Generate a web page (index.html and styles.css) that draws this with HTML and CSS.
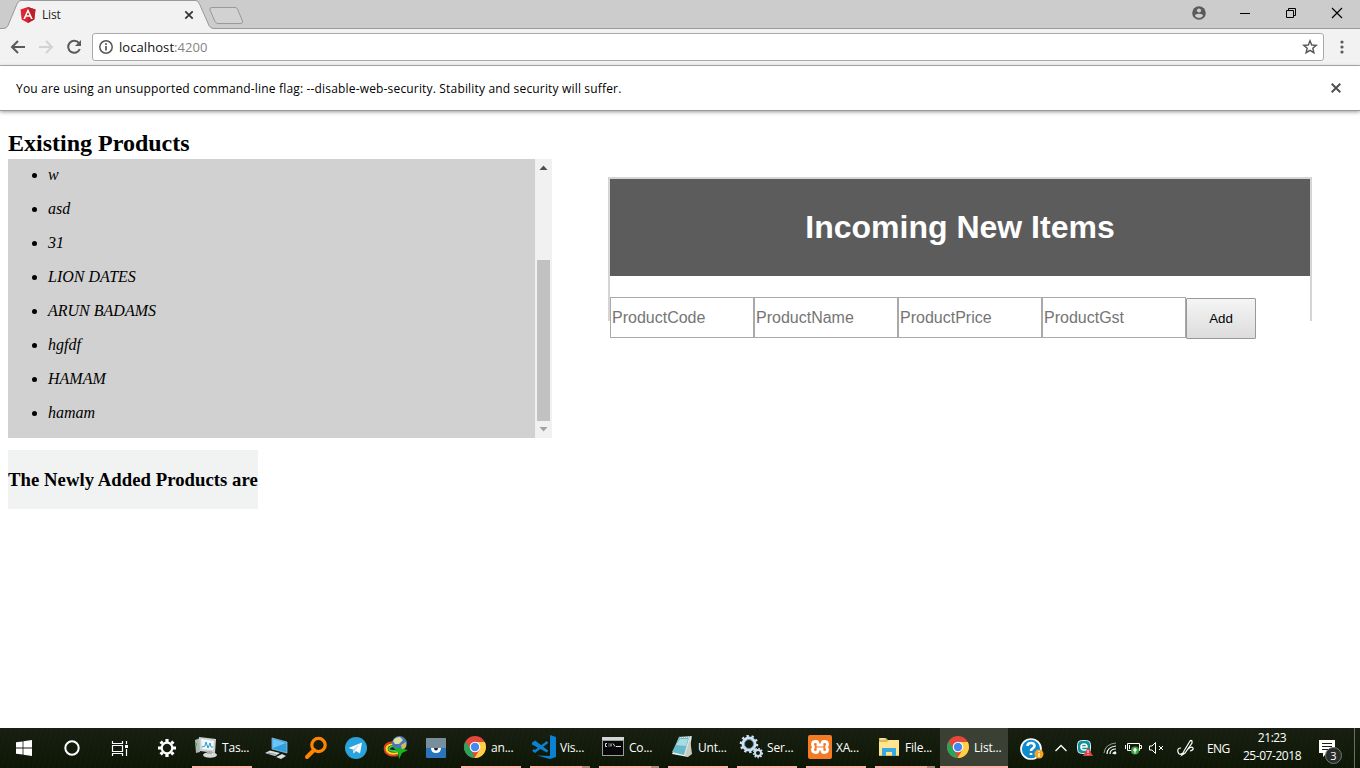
FILE: index.html
```html
<!DOCTYPE html>
<html lang="en">
<head>
<meta charset="utf-8">
<title>List</title>
<link rel="stylesheet" href="styles.css">
</head>
<body>
<div class="screen">
  <header class="tabstrip">
    <svg class="tab-shapes" width="260" height="29" viewBox="0 0 260 29">
      <path d="M0 28.500H3Q7 28.500 8 25.500L17 4Q18.500 .500 21 .500H196Q198 .500 199.500 4L209 25.500Q210 28.500 214 28.500H260V30H0Z" fill="#f2f2f2" stroke="#999"/>
      <path d="M212 7.500H235Q237 7.500 237.500 9L242.500 21Q243 23.500 241 23.500H218Q216 23.500 215 21.500L210 10Q209 7.500 212 7.500Z" fill="#d2d2d2" stroke="#999"/>
    </svg>
    <div class="tab">
      <svg width="16" height="16" viewBox="0 0 16 16"><path d="M8 0L15.500 2.600L14.300 12.500L8 16L1.700 12.500L.5 2.600Z" fill="#dd2634"/><path d="M8 0L15.500 2.600L14.300 12.500L8 16Z" fill="#bd202d"/><path fill-rule="evenodd" d="M8 1.800L12.700 12H10.900L10 9.700H6L5.100 12H3.300ZM8 5.200L6.600 8.300H9.400Z" fill="#fff"/></svg>
      <span class="tab-title">List</span>
      <svg class="tab-close" width="10" height="10" viewBox="0 0 10 10"><path d="M1.300 1.300L8.700 8.700M8.700 1.300L1.300 8.700" stroke="#333" stroke-width="1.700"/></svg>
    </div>
    <div class="window-controls">
      <svg class="profile" width="14" height="14" viewBox="0 0 14 14"><circle cx="7" cy="7" r="6.800" fill="#5a5a5a"/><circle cx="7" cy="4.500" r="2.100" fill="#ccc"/><path d="M3 10Q3 7.800 7 7.800T11 10Q9.500 12 7 12T3 10Z" fill="#ccc"/></svg>
      <svg width="46" height="28" viewBox="0 0 46 28"><path d="M18 13.500H28" stroke="#000"/></svg>
      <svg width="46" height="28" viewBox="0 0 46 28" fill="none" stroke="#000"><path d="M18.500 10.500H25.500V17.500H18.500ZM20.500 10V8.500H27.500V15.500H26"/></svg>
      <svg width="46" height="28" viewBox="0 0 46 28"><path d="M18 8L28 18M28 8L18 18" stroke="#000" stroke-width="1.200"/></svg>
    </div>
  </header>

  <div class="toolbar">
    <svg class="nav-icon" width="16" height="16" viewBox="0 0 16 16"><path d="M15 8H2.500M8 2L2 8L8 14" fill="none" stroke="#5a5a5a" stroke-width="2"/></svg>
    <svg class="nav-icon" width="16" height="16" viewBox="0 0 16 16"><path d="M1 8H13.500M8 2L14 8L8 14" fill="none" stroke="#d2d2d2" stroke-width="2"/></svg>
    <svg class="nav-icon" width="16" height="16" viewBox="0 0 16 16"><path d="M13 4.200A6 6 0 1 0 13.800 10" fill="none" stroke="#5a5a5a" stroke-width="2"/><path d="M15 1V7H9Z" fill="#5a5a5a"/></svg>
    <div class="address">
      <svg width="14" height="14" viewBox="0 0 14 14"><circle cx="7" cy="7" r="6.200" fill="none" stroke="#555" stroke-width="1.500"/><path d="M7 6V10.500M7 3.300V5" stroke="#555" stroke-width="1.700"/></svg>
      <span class="url">localhost<span class="port">:4200</span></span>
      <svg class="star" width="16" height="16" viewBox="0 0 16 16"><path d="M8 1.800L9.700 6L14.200 6.300L10.800 9.200L11.900 13.700L8 11.300L4.100 13.700L5.200 9.200L1.800 6.300L6.300 6Z" fill="none" stroke="#555" stroke-width="1.400"/></svg>
    </div>
    <svg class="menu" width="4" height="14" viewBox="0 0 4 14" fill="#5a5a5a"><circle cx="2" cy="2" r="1.600"/><circle cx="2" cy="7" r="1.600"/><circle cx="2" cy="12" r="1.600"/></svg>
  </div>

  <div class="infobar">
    <span>You are using an unsupported command-line flag: --disable-web-security. Stability and security will suffer.</span>
    <svg width="10" height="10" viewBox="0 0 10 10"><path d="M.7 .7L9.300 9.300M9.300 .7L.7 9.300" stroke="#505050" stroke-width="2"/></svg>
  </div>

  <main class="page">
    <section class="existing">
      <h2>Existing Products</h2>
      <div class="list-box">
        <ul>
          <li>w</li><li>asd</li><li>31</li><li>LION DATES</li><li>ARUN BADAMS</li><li>hgfdf</li><li>HAMAM</li><li>hamam</li>
        </ul>
        <div class="scrollbar">
          <svg width="17" height="17" viewBox="0 0 17 17"><path d="M4.500 11L8.500 6.500L12.500 11Z" fill="#505050"/></svg>
          <div class="thumb"></div>
          <svg width="17" height="17" viewBox="0 0 17 17"><path d="M4.500 6L8.500 10.500L12.500 6Z" fill="#a3a3a3"/></svg>
        </div>
      </div>
      <div class="added"><h3>The Newly Added Products are</h3></div>
    </section>
    <section class="incoming">
      <div class="incoming-header"><h1>Incoming New Items</h1></div>
      <form class="fields">
        <input placeholder="ProductCode"><input placeholder="ProductName"><input placeholder="ProductPrice"><input placeholder="ProductGst"><button type="button">Add</button>
      </form>
    </section>
  </main>

  <footer class="taskbar">
    <div class="sys"><svg width="16" height="16" viewBox="0 0 16 16" fill="#fff"><path d="M0 2.300L6.600 1.400V7.600H0ZM7.400 1.300L16 0V7.600H7.400ZM0 8.400H6.600V14.600L0 13.700ZM7.400 8.400H16V16L7.400 14.700Z"/></svg></div>
    <div class="sys"><svg width="16" height="16" viewBox="0 0 16 16"><circle cx="8" cy="8" r="6.700" fill="none" stroke="#fff" stroke-width="2"/></svg></div>
    <div class="sys"><svg class="task-view" width="17" height="17" viewBox="0 0 17 17" fill="none" stroke="#fff"><path d="M1.500 1V3.500H11.500V1M1.500 16V13.500H11.500V16M1.500 5.500H11.500V11.500H1.500ZM15.500 1V4M15.500 9V16" stroke-width="1.200"/><path d="M14 5H17V8H14Z" fill="#fff" stroke="none"/></svg></div>
    <div class="sys"><svg class="gear" width="20" height="20" viewBox="-10 -10 20 20" stroke="#fff"><circle r="5.300" fill="none" stroke-width="2.200"/><g stroke-width="3.200"><path d="M0-9V-6M0 9V6M-9 0H-6M9 0H6M-6.400-6.400L-4.300-4.300M6.400 6.400L4.300 4.300M6.400-6.400L4.300-4.300M-6.400 6.400L-4.300 4.300"/></g></svg></div>

    <div class="task task-first"><svg width="24" height="24" viewBox="0 0 24 24"><path d="M1 5L6 3V17L2 18Z" fill="#aeb5b4"/><path d="M2 8V11" stroke="#41ba3e" stroke-width="2"/><path d="M5 2L22 4L21 18L6 16Z" fill="#ccd1d1"/><path d="M7 4L20 6L19 15L8 14Z" fill="#eff8fa"/><path d="M8 12L11 11L12 7L14 13L16 8L17 12H19" fill="none" stroke="#3098ca"/><ellipse cx="16" cy="20" rx="7" ry="2.800" fill="#d7dadb"/><path d="M13 16H18V19H13Z" fill="#a8afaf"/></svg><span>Tas...</span></div>

    <div class="pin"><svg width="24" height="24" viewBox="0 0 24 24"><path d="M8 2L23 6V17L8 13Z" fill="#2fa0df" stroke="#9fcbe3" stroke-width=".7"/><path d="M9 3L22 7L9 12Z" fill="#6ec4f5"/><path d="M1 17L6 14.500L16 17L11 20ZM12 21L18 18L22 20L17 23Z" fill="#d8e0e4"/><path d="M4 17L12 18.500" stroke="#82919a"/></svg></div>
    <div class="pin"><svg width="24" height="24" viewBox="0 0 24 24"><circle cx="14.500" cy="9" r="6.700" fill="none" stroke="#ff8500" stroke-width="3.200"/><path d="M10 14L3 21" stroke="#ff8500" stroke-width="4" stroke-linecap="round"/></svg></div>
    <div class="pin"><svg width="24" height="24" viewBox="0 0 24 24"><circle cx="12" cy="12" r="11" fill="#29a3dc"/><path d="M4.500 12L18 6.500L16 17.500L12 15L9.500 17.500L9 13.500Z" fill="#fff"/><path d="M9 13.500L16 8L11 14.500L9.500 17.500Z" fill="#b9d9e9"/></svg></div>
    <div class="pin"><svg width="26" height="26" viewBox="0 0 26 26" fill="none"><path d="M11 7Q-1 8 2.500 17Q7 22 15 20" stroke="#e13d27" stroke-width="2"/><path d="M11 9Q1 10 4.500 16.500Q8 20 15 18" stroke="#ffd820" stroke-width="2.200"/><path d="M11 11Q4 12 7 15.500L15 16.500" stroke="#42c949" stroke-width="2"/><circle cx="16.500" cy="8.500" r="7.500" fill="#4778bd"/><path d="M10 6Q12 2 17 2L20 5L16 9L12 9Z" fill="#dfdf9b"/><path d="M18 10L23 7L23 12L19 15Z" fill="#d7b94f"/><path d="M10 12L25 15L19 18L16 24L15 17Z" fill="#18b51d"/></svg></div>
    <div class="pin"><svg width="20" height="20" viewBox="0 0 20 20"><rect width="20" height="20" rx="1" fill="#2874bd"/><path d="M0 1Q0 0 1 0H19Q20 0 20 1V10H0Z" fill="#788e9c"/><path d="M5 10H15Q15 15 10 15T5 10Z" fill="#fff"/><path d="M8 10H12Q12 12.500 10 12.500T8 10Z" fill="#182534"/></svg></div>

    <div class="task chrome-task"><svg width="24" height="24" viewBox="0 0 24 24"><circle cx="12" cy="12" r="11" fill="#e4473b"/><path d="M2.500 6.500L8 15L12 23A11 11 0 0 1 2.500 6.500Z" fill="#28a45b"/><path d="M12 7H21.800A11 11 0 0 1 11.500 23L17 14Z" fill="#ffd043"/><circle cx="12" cy="12" r="5.300" fill="#fff"/><circle cx="12" cy="12" r="4.200" fill="#4587f3"/></svg><span>an...</span></div>
    <div class="task stacked"><svg width="24" height="24" viewBox="0 0 24 24"><path d="M18 0L24 2V22L18 24L5 20.500L18 21Z" fill="#0b82d1"/><path d="M15.500 7L3 16.500L1 15M1 8.500L3 7L15.500 16.500Z" fill="none" stroke="#0b82d1" stroke-width="2.500"/></svg><span>Vis...</span></div>
    <div class="task stacked"><svg width="24" height="24" viewBox="0 0 24 24"><path d="M1 2H23V21H1Z" fill="#9b9e9e"/><path d="M1 2H23V5H1Z" fill="#d4d6d6"/><path d="M2 6H22V20H2Z" fill="#080808"/><path d="M6 8.500H4.500V11.500H6M8 8.500V9.500M8 10.500V11.500M10 8.500V11.500M12 8.500L14 11.500M15 11.500H20" fill="none" stroke="#ddd"/></svg><span>Co...</span></div>
    <div class="task"><svg width="24" height="24" viewBox="0 0 24 24"><path d="M9 2L22 1L18 22L2 19Z" fill="#e5efed"/><path d="M9 3L19 3L14 20L2 17Z" fill="#68bac9"/><path d="M10 4H18L16 11L6 10Z" fill="#a9dce1"/><path d="M20 3L22 19L18 22L15 20Z" fill="#c6cdbf"/><path d="M9 2H22" stroke="#54828c" stroke-dasharray="1 1"/></svg><span>Unt...</span></div>
    <div class="task"><svg width="24" height="24" viewBox="0 0 24 24" fill="none"><g stroke="#cfe2f2"><circle cx="10" cy="9" r="6" stroke-width="3"/><circle cx="10" cy="9" r="8" stroke-width="2.500" stroke-dasharray="2.300 2.700"/><circle cx="19" cy="18" r="3" stroke-width="2"/><circle cx="19" cy="18" r="4.500" stroke-width="1.500" stroke-dasharray="1.500 1.500"/></g><circle cx="10" cy="9" r="4.500" stroke="#6895bd"/></svg><span>Ser...</span></div>
    <div class="task"><svg width="24" height="24" viewBox="0 0 24 24"><rect width="24" height="24" rx="2" fill="#f47b26"/><path d="M8 6.500Q4.500 6.500 4.500 9.200Q4.500 11.500 6.500 12Q4.500 12.500 4.500 14.800Q4.500 17.500 8 17.500Q10 17.500 10 15V14H14V15Q14 17.500 16 17.500Q19.500 17.500 19.500 14.800Q19.500 12.500 17.500 12Q19.500 11.500 19.500 9.200Q19.500 6.500 16 6.500Q14 6.500 14 9V10H10V9Q10 6.500 8 6.500Z" fill="none" stroke="#fff" stroke-width="2.800"/></svg><span>XA...</span></div>
    <div class="task stacked"><svg width="24" height="24" viewBox="0 0 24 24"><path d="M2 3H9L11 5H22V21H2Z" fill="#ddb951"/><path d="M2 7H10L12 5H22V20H2Z" fill="#ffe591"/><path d="M5 13H19V21H15V17H9V21H5Z" fill="#38a9de"/><path d="M3 4H8" stroke="#fff"/></svg><span>File...</span></div>
    <div class="task active"><svg width="24" height="24" viewBox="0 0 24 24"><circle cx="12" cy="12" r="11" fill="#e4473b"/><path d="M2.500 6.500L8 15L12 23A11 11 0 0 1 2.500 6.500Z" fill="#28a45b"/><path d="M12 7H21.800A11 11 0 0 1 11.500 23L17 14Z" fill="#ffd043"/><circle cx="12" cy="12" r="5.300" fill="#fff"/><circle cx="12" cy="12" r="4.200" fill="#4587f3"/></svg><span>List...</span></div>

    <div class="tray">
      <svg class="help" width="24" height="24" viewBox="0 0 24 24"><circle cx="11" cy="12" r="10" fill="#108cce" stroke="#fff" stroke-width="1.700"/><path d="M7.500 9Q7.500 6 11 6T14.500 9Q14.500 10.500 12 12Q11 12.700 11 14M11 16V18" fill="none" stroke="#fff" stroke-width="2.600"/><circle cx="19" cy="17" r="4.500" fill="#f2a620"/><path d="M19 14V15M19 16V20" stroke="#fff" stroke-width="1.300"/></svg>
      <svg class="chevron" width="12" height="8" viewBox="0 0 12 8"><path d="M.5 7L6 1.500L11.500 7" fill="none" stroke="#fff" stroke-width="1.300"/></svg>
      <svg class="eset" width="17" height="17" viewBox="0 0 17 17"><rect x=".5" y=".5" width="13" height="13" rx="4" fill="#12909b" stroke="#d7eeee"/><path d="M4 7H10Q10 4 7 4T4 7Q4 10 7 10H10" fill="none" stroke="#fff" stroke-width="1.600"/><path d="M11 7.500L16 16H6Z" fill="#e34240"/><path d="M11 10V13M11 14V15" stroke="#fff"/></svg>
      <svg class="wifi" width="14" height="14" viewBox="0 0 14 14" fill="none" stroke="#fff"><path d="M1 12Q2 3 13 2" stroke="#999"/><path d="M4 13Q4 6 13 5M7 13Q7 8 13 8M10 13Q10 11 13 11" stroke-width="1.200"/><circle cx="12" cy="12" r="1" fill="#fff"/></svg>
      <svg class="battery" width="17" height="14" viewBox="0 0 17 14"><path d="M2.500 2.500H14.500V9.500H2.500ZM15 4.500H16.500V7.500H15M4.500 4V8M.500 4V8" fill="none" stroke="#fff"/><circle cx="10" cy="9.500" r="4" fill="#36a642"/><path d="M10 12.500V10" stroke="#fff"/><path d="M8 9Q10 12 12 9L10 6.500Z" fill="#fff"/></svg>
      <svg class="volume" width="16" height="14" viewBox="0 0 16 14" fill="none" stroke="#fff"><path d="M.5 5H3L6.500 1.500V12.500L3 9H.5ZM10 5L14 9M14 5L10 9"/></svg>
      <svg class="pen" width="18" height="18" viewBox="0 0 18 18" fill="none" stroke="#fff" stroke-width="1.200"><path d="M4 9Q0 9 1 13T6 14M7 12L13 2Q14 1 15 2V4L8 14L5 16Z"/><path d="M11 10Q14 7 16 9Q17 11 13 12"/></svg>
      <span class="language">ENG</span>
      <div class="clock"><span>21:23</span><span>25-07-2018</span></div>
      <div class="notifications"><svg width="17" height="17" viewBox="0 0 17 17"><path d="M0 0H16V13H8L4 17V13H0Z" fill="#fff"/><path d="M3 3.500H13M3 6.500H13M3 9.500H10" stroke="#15200f"/></svg><span class="badge">3</span></div>
    </div>
  </footer>
</div>
</body>
</html>
```

FILE: styles.css
```css
* { box-sizing: border-box; }
body { margin: 0; overflow: hidden; background: #fff; font-family: "Open Sans", "Noto Sans", sans-serif; font-size: 12px; }
svg { display: block; flex: none; }
.screen { width: 1360px; height: 768px; display: flex; flex-direction: column; }

.tabstrip { position: relative; height: 29px; flex: none; display: flex; align-items: flex-start; justify-content: space-between; background: #ccc; border-bottom: 1px solid #999; }
.tab-shapes { position: absolute; left: 0; top: 0; }
.tab { position: relative; display: flex; align-items: center; width: 194px; height: 29px; padding-left: 20px; }
.tab-title { margin-left: 6px; font-size: 12px; letter-spacing: -.2px; color: #222; }
.tab-close { margin-left: auto; }
.window-controls { display: flex; align-items: center; height: 28px; }
.window-controls .profile { margin: 0 16px 2px 0; }

.toolbar { height: 37px; flex: none; display: flex; align-items: center; padding: 0 16px 0 10px; background: #f2f2f2; border-bottom: 1px solid #b3b3b3; }
.nav-icon { margin-right: 12px; }
.address { width: 1232px; flex: none; height: 28px; margin-left: -2px; display: flex; align-items: center; padding: 0 5px 0 6px; border: 1px solid #aaa; border-radius: 3px; background: #fff; }
.url { margin-left: 6px; font-size: 13px; color: #111; letter-spacing: .07px; }
.port { color: #858585; }
.star { margin-left: auto; }
.menu { margin-left: 16px; }

.infobar { position: relative; z-index: 1; height: 45px; flex: none; display: flex; align-items: center; justify-content: space-between; padding: 0 19px 0 16px; border-bottom: 1px solid #999; box-shadow: 0 1px 4px rgba(0,0,0,.4); color: #000; letter-spacing: .17px; background: #fff; }

.page { flex: 1; display: flex; align-items: flex-start; gap: 56px; padding: 18px 48px 0 8px; }
.existing { width: 544px; font-family: "Liberation Serif", serif; }
.existing h2 { margin: 0; height: 30px; font-size: 24px; line-height: 28px; }
.list-box { display: flex; justify-content: space-between; height: 279px; background: #d1d1d1; overflow: hidden; }
.list-box ul { margin: -1px 0 0; padding-left: 40px; font-size: 16px; line-height: 34px; font-style: italic; }
.scrollbar { width: 17px; display: flex; flex-direction: column; background: #f1f1f1; }
.thumb { width: 13px; height: 161px; margin: 84px 0 0 2px; background: #c1c1c1; }
.added { width: 250px; height: 59px; margin-top: 12px; display: flex; align-items: center; background: #f1f3f3; }
.added h3 { margin: 0; font-size: 18.72px; letter-spacing: .04px; white-space: nowrap; }

.incoming { width: 704px; height: 144px; margin-top: 48px; border: 2px solid #d5d5d5; border-bottom: 0; font-family: "Liberation Sans", sans-serif; }
.incoming-header { height: 97px; display: flex; align-items: center; justify-content: center; background: #5c5c5c; color: #fff; }
.incoming-header h1 { margin: 0; font-size: 32px; }
.fields { display: flex; margin: 21px 0 0; }
.fields input { width: 144px; height: 41px; padding: 1px; border: 1px solid #a9a9a9; border-radius: 0; font: 16px "Liberation Sans", sans-serif; }
.fields input::placeholder { color: #757575; }
.fields button { width: 70px; height: 41px; margin-top: 1px; padding: 0; border: 1px solid #999; border-radius: 1px; background: linear-gradient(#f5f5f5, #dcdcdc); color: #000; font: 13.33px "Liberation Sans", sans-serif; }

.taskbar { height: 40px; flex: none; display: flex; align-items: stretch; background: repeating-linear-gradient(103deg, rgba(30,43,20,.12) 0 2px, transparent 2px 5px), linear-gradient(#181f12, #0d1605); color: #fff; }
.sys { width: 48px; flex: none; display: flex; align-items: center; justify-content: center; }
.task-view, .gear { margin-right: 2px; }
.task { width: 60px; flex: none; margin-right: 9px; display: flex; align-items: center; padding-left: 2px; border-bottom: 2px solid #ffb2ac; white-space: nowrap; letter-spacing: -.2px; }
.task span { margin-left: 4px; }
.task-first { margin-right: 4px; }
.pin { width: 40px; flex: none; display: flex; align-items: center; justify-content: center; }
.chrome-task { margin-left: 5px; }
.stacked { border-image: linear-gradient(90deg, #ffb2ac 51px, #b48a83 51px) 2; }
.active { width: 68px; margin-left: -4px; margin-right: 12px; padding-left: 6px; background: #3b4035; }
.tray { display: flex; align-items: center; flex: 1; }
.help { margin-top: 2px; }
.chevron { margin-left: 11px; }
.eset { margin-left: 10px; }
.wifi { margin-left: 9px; }
.battery { margin-left: 8px; }
.volume { margin-left: 7px; }
.pen { margin-left: 12px; }
.language { width: 24px; margin-left: 12px; letter-spacing: -.6px; }
.clock { width: 60px; margin-left: 11px; display: flex; flex-direction: column; align-items: center; line-height: 18px; letter-spacing: -.45px; margin-bottom: 2px; white-space: nowrap; }
.notifications { position: relative; width: 36px; height: 40px; margin-left: 17px; padding-top: 12px; border-right: 1px solid #667060; }
.badge { position: absolute; left: 6px; top: 19px; width: 17px; height: 17px; border: 1px solid #777; border-radius: 50%; background: #292d29; text-align: center; font-size: 11px; line-height: 15px; }
```
